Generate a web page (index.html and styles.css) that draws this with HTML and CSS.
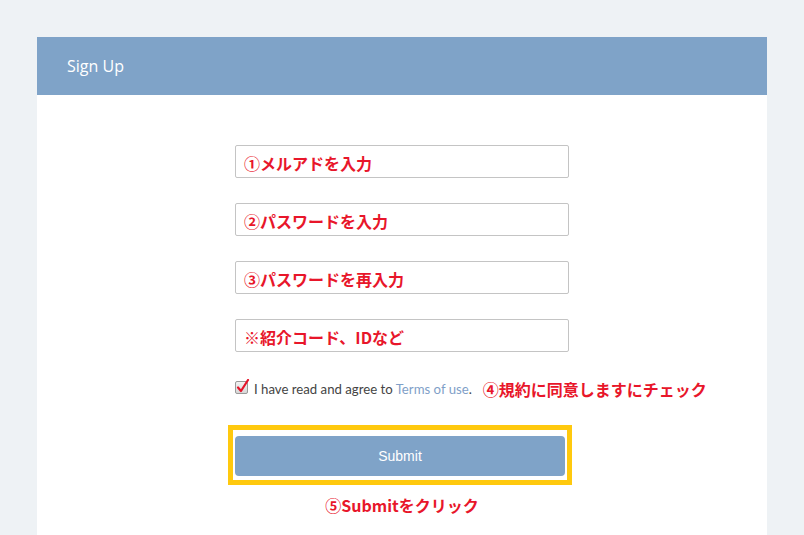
FILE: index.html
```html
<!DOCTYPE html>
<html lang="ja">
<head>
<meta charset="utf-8">
<title>Sign Up</title>
<link rel="stylesheet" href="styles.css">
</head>
<body>
<div class="card">
  <div class="card-header">Sign Up</div>
  <div class="card-body">
    <div class="form">
      <div class="field"><span class="note">①メルアドを入力</span></div>
      <div class="field"><span class="note">②パスワードを入力</span></div>
      <div class="field"><span class="note">③パスワードを再入力</span></div>
      <div class="field"><span class="note">※紹介コード、IDなど</span></div>
      <div class="agree">
        <svg class="check" width="15" height="15" viewBox="0 0 15 15">
          <defs>
            <linearGradient id="g" x1="0" y1="0" x2="0" y2="1">
              <stop offset="0" stop-color="#f4f4f4"/>
              <stop offset="1" stop-color="#d6d6d6"/>
            </linearGradient>
          </defs>
          <rect x="0.5" y="2.5" width="12" height="12" rx="1.5" fill="url(#g)" stroke="#9a9a9a"/>
          <path d="M3 8.5 L6 12 L13 1" fill="none" stroke="#e5142a" stroke-width="2.2" stroke-linecap="round" stroke-linejoin="round"/>
        </svg>
        <span class="agree-text">I have read and agree to <a class="terms">Terms of use</a>.</span>
        <span class="note agree-note">④規約に同意しますにチェック</span>
      </div>
      <div class="submit-wrap">
        <button class="submit" type="button">Submit</button>
        <div class="highlight"></div>
      </div>
      <div class="note submit-note">⑤Submitをクリック</div>
    </div>
  </div>
</div>
</body>
</html>
```
FILE: styles.css
```css
html, body {
  margin: 0;
  padding: 0;
}
body {
  background: #eef2f5;
  padding-top: 37px;
  font-family: "Open Sans", "Noto Sans CJK JP", sans-serif;
}
.card {
  margin: 0 37px 0 37px;
  background: #ffffff;
  min-height: 498px;
}
.card-header {
  height: 58px;
  background: #7fa3c8;
  color: #ffffff;
  font-size: 16px;
  line-height: 58px;
  padding-left: 30px;
}
.card-body {
  padding-top: 50px;
  display: flex;
  justify-content: center;
}
.form {
  width: 334px;
  display: flex;
  flex-direction: column;
}
.field {
  border: 1px solid #c4c4c4;
  border-radius: 2px;
  margin-bottom: 25px;
  display: flex;
  align-items: center;
  padding: 2px 8px 0 8px;
  box-sizing: content-box;
  height: 29px;
}
.note {
  color: #e8162a;
  font-family: "Noto Sans CJK JP", sans-serif;
  font-weight: 700;
  font-size: 16px;
  line-height: 20px;
  white-space: nowrap;
}
.agree {
  margin-top: 2px;
  display: flex;
  align-items: center;
  height: 20px;
}
.check {
  flex: none;
  margin-right: 4px;
  margin-top: -6px;
}
.agree-text {
  font-family: "Lato", "Open Sans", sans-serif;
  font-size: 13.2px;
  color: #444444;
  white-space: nowrap;
}
.terms {
  color: #7f9fc8;
}
.agree-note {
  margin-left: 11px;
}
.submit-wrap {
  position: relative;
  margin-top: 37px;
  width: 330px;
}
.submit {
  display: block;
  width: 330px;
  height: 40px;
  border: none;
  border-radius: 4px;
  background: #7fa3c8;
  color: #ffffff;
  font-family: "Liberation Sans", Arial, sans-serif;
  font-size: 14px;
  cursor: pointer;
}
.highlight {
  position: absolute;
  left: -7px;
  top: -11px;
  width: 334px;
  height: 50px;
  border: 5px solid #ffc90e;
  pointer-events: none;
}
.submit-note {
  margin-top: 19px;
  text-align: center;
  width: 334px;
}
```
